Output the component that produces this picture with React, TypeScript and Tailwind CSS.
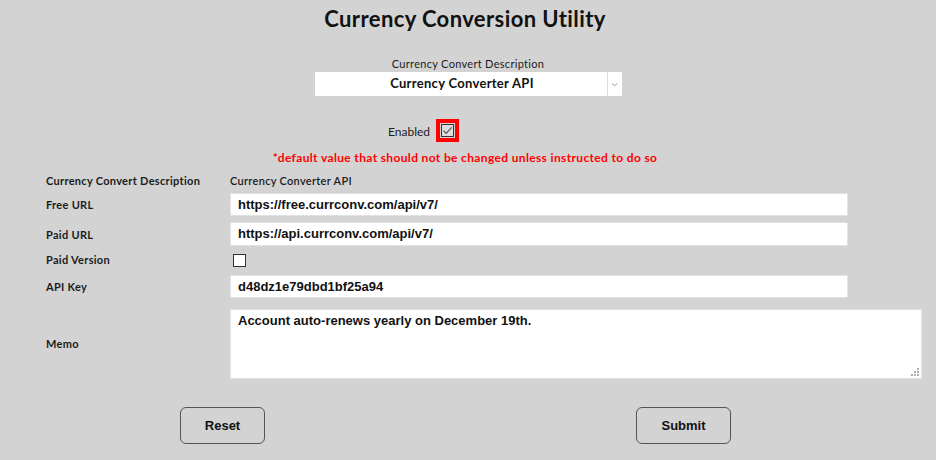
import { useState } from 'react'

const label = "font-['Lato',sans-serif] text-[11px] tracking-[0.3px] text-[#1c1c1c]"
const inputCls =
  "h-full w-full border border-[#e2e2e2] bg-white pl-[7px] font-['Liberation_Sans',Arial,sans-serif] text-[13px] font-bold text-[#111] outline-none"

function Row({ name, h, mt, pad = 'pt-[2px]', children }: { name: string; h: number; mt: string; pad?: string; children: React.ReactNode }) {
  return (
    <div className={`flex items-center ${mt}`} style={{ height: h }}>
      <div className={`${label} ${pad} w-[230px] shrink-0 whitespace-nowrap pl-[46px] font-bold`}>{name}</div>
      {children}
    </div>
  )
}

export default function App() {
  const [freeUrl, setFreeUrl] = useState('https://free.currconv.com/api/v7/')
  const [paidUrl, setPaidUrl] = useState('https://api.currconv.com/api/v7/')
  const [apiKey, setApiKey] = useState('d48dz1e79dbd1bf25a94')
  const [memo, setMemo] = useState('Account auto-renews yearly on December 19th.')
  const [paid, setPaid] = useState(false)

  return (
    <div className="min-h-[460px] w-[936px] bg-[#d3d3d3] text-[#1c1c1c]">
      <h1 className="pr-[6px] pt-[6px] text-center font-['Lato',sans-serif] text-[22px] font-bold leading-[26px] tracking-[0.4px] text-[#111]">
        Currency Conversion Utility
      </h1>

      {/* description select */}
      <div className="mt-[25px] flex flex-col items-center">
        <div className={`${label} leading-[14px]`}>Currency Convert Description</div>
        <div className="mt-[1px] flex h-[24px] w-[307px] bg-white">
          <div className="flex flex-1 items-center justify-center pl-[3px] font-['Lato',sans-serif] text-[13px] font-bold tracking-[0.3px] text-[#111]">
            Currency Converter API
          </div>
          <div className="flex w-[15px] items-center justify-center border-l border-[#dcdcdc]">
            <svg width="7" height="5" viewBox="0 0 7 5">
              <path d="M0.8 1.2 L3.5 3.8 L6.2 1.2" fill="none" stroke="#9a9a9a" strokeWidth="1" />
            </svg>
          </div>
        </div>
      </div>

      {/* enabled */}
      <div className="mt-[23px] flex items-center pl-[388px]">
        <span className={`${label} pt-[2px] text-[12px] tracking-normal`}>Enabled</span>
        <div className="ml-[6px] border-4 border-[#ff0000] p-[1px]">
          <div className="flex h-[13px] w-[13px] items-center justify-center border border-[#333] bg-[#dedede]">
            <svg width="11" height="11" viewBox="0 0 11 11">
              <path d="M1.5 5.6 L4.2 8.4 L9.6 2.4" fill="none" stroke="#555" strokeWidth="1.2" />
            </svg>
          </div>
        </div>
      </div>

      <p className="mt-[8px] pr-[6px] text-center font-['Lato',sans-serif] text-[12px] font-bold leading-[16px] tracking-[0.35px] text-[#ff0000]">
        *default value that should not be changed unless instructed to do so
      </p>

      {/* form rows */}
      <Row name="Currency Convert Description" h={18} mt="mt-[5px]">
        <span className={`${label} pt-[2px] font-semibold`}>Currency Converter API</span>
      </Row>
      <Row name="Free URL" h={23} mt="mt-[2px]" pad="pt-[6px]">
        <div className="h-full w-[618px]">
          <input className={inputCls} value={freeUrl} onChange={e => setFreeUrl(e.target.value)} />
        </div>
      </Row>
      <Row name="Paid URL" h={24} mt="mt-[6px]" pad="pt-[6px]">
        <div className="h-full w-[618px]">
          <input className={inputCls} value={paidUrl} onChange={e => setPaidUrl(e.target.value)} />
        </div>
      </Row>
      <Row name="Paid Version" h={25} mt="mt-[2px]" pad="pt-[4px]">
        <button
          onClick={() => setPaid(p => !p)}
          className="ml-[3px] mt-[4px] h-[13px] w-[13px] border border-[#333] bg-white"
        >
          {paid && '✓'}
        </button>
      </Row>
      <Row name="API Key" h={23} mt="mt-[2px]" pad="pt-[6px]">
        <div className="h-full w-[618px]">
          <input className={inputCls} value={apiKey} onChange={e => setApiKey(e.target.value)} />
        </div>
      </Row>
      <Row name="Memo" h={70} mt="mt-[13px]" pad="pt-0">
        <div className="relative h-full w-[692px]">
          <textarea
            className="h-full w-full resize-none border border-[#e2e2e2] bg-white pl-[7px] pt-[2px] font-['Liberation_Sans',Arial,sans-serif] text-[13px] font-bold leading-[18px] text-[#111] outline-none"
            value={memo}
            onChange={e => setMemo(e.target.value)}
          />
          <svg className="absolute bottom-[2px] right-[2px]" width="9" height="9" viewBox="0 0 9 9">
            <rect x="6" y="0" width="2" height="2" fill="#b0b0b0" />
            <rect x="3" y="3" width="2" height="2" fill="#b0b0b0" />
            <rect x="6" y="3" width="2" height="2" fill="#b0b0b0" />
            <rect x="0" y="6" width="2" height="2" fill="#b0b0b0" />
            <rect x="3" y="6" width="2" height="2" fill="#b0b0b0" />
            <rect x="6" y="6" width="2" height="2" fill="#b0b0b0" />
          </svg>
        </div>
      </Row>

      {/* actions */}
      <div className="mt-[28px] flex pl-[180px]">
        <button className="h-[37px] w-[85px] rounded-[6px] border border-[#555] font-['Liberation_Sans',Arial,sans-serif] text-[13px] font-bold text-[#111]">
          Reset
        </button>
        <button className="ml-[371px] h-[37px] w-[95px] rounded-[6px] border border-[#555] font-['Liberation_Sans',Arial,sans-serif] text-[13px] font-bold text-[#111]">
          Submit
        </button>
      </div>
    </div>
  )
}
